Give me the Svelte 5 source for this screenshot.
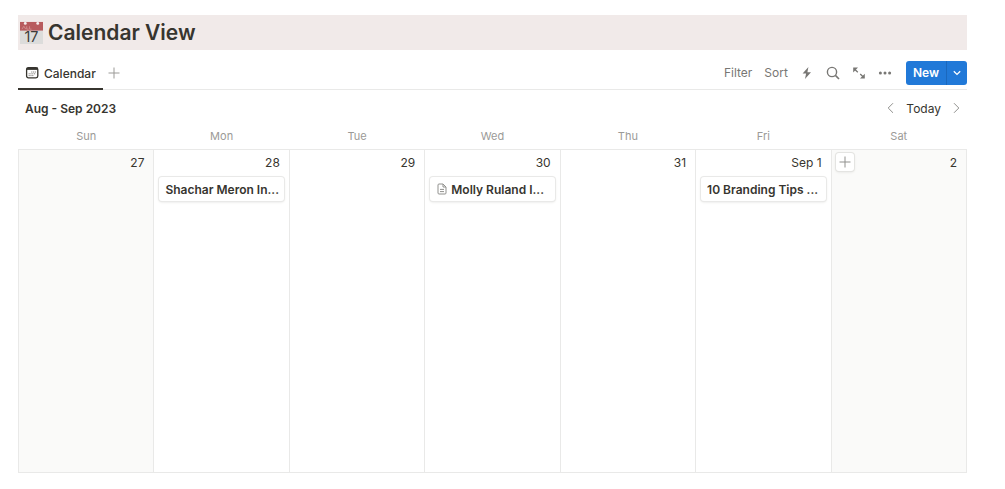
<script>
  const weekdays = ['Sun', 'Mon', 'Tue', 'Wed', 'Thu', 'Fri', 'Sat'];

  const days = [
    { label: '27', weekend: true },
    { label: '28', event: { title: 'Shachar Meron In...' } },
    { label: '29' },
    { label: '30', event: { title: 'Molly Ruland I...', page: true } },
    { label: '31' },
    { label: 'Sep 1', event: { title: '10 Branding Tips ...' } },
    { label: '2', weekend: true, add: true }
  ];
</script>

<main>
  <header class="title">
    <svg class="title-icon" viewBox="0 0 24 24" aria-hidden="true">
      <rect x="0" y="1" width="24" height="23" fill="#dcdcdb" />
      <rect x="0" y="1" width="24" height="9" fill="#b85b5e" />
      <path d="M2 8.5l2-3 2 3M7 5.5v3h2M10 5.5v3h2" fill="none" stroke="#d08c8d" stroke-width="1" />
      <circle cx="5.5" cy="2.5" r="1.5" fill="#f6eeee" />
      <circle cx="18.5" cy="2.5" r="1.5" fill="#f6eeee" />
      <text x="12" y="22" text-anchor="middle" font-size="15" fill="#3c3b39">17</text>
    </svg>
    <h1>Calendar View</h1>
  </header>

  <nav class="toolbar">
    <button class="tab">
      <svg width="14" height="14" viewBox="0 0 14 14" aria-hidden="true">
        <rect x="1.6" y="1.6" width="11.2" height="10.2" rx="1.8" fill="none" stroke="currentColor" stroke-width="1.3" />
        <path d="M1.6 2.8h11.2" stroke="currentColor" stroke-width="2.2" />
        <path d="M6.2 6h1.2M8 6h1.2M9.8 6h1.2M3.6 7.8h1.2M5.4 7.8h1.2M7.2 7.8h1.2M9 7.8h1.2M3.6 9.6h1.2M5.4 9.6h1.2M7.2 9.6h1.2" stroke="#8a8884" stroke-width="1" />
      </svg>
      Calendar
    </button>
    <button class="icon add-view" aria-label="Add view">
      <svg width="12" height="12" viewBox="0 0 12 12"><path d="M6 0.5v11M0.5 6h11" /></svg>
    </button>

    <div class="actions">
      <button>Filter</button>
      <button>Sort</button>
      <button class="icon" aria-label="Automations">
        <svg width="14" height="14" viewBox="0 0 14 14"><path d="M8.4 1L2.6 7.6h3.5L5 13l6-6.8H7.4z" fill="currentColor" stroke="none" /></svg>
      </button>
      <button class="icon" aria-label="Search">
        <svg width="14" height="14" viewBox="0 0 14 14"><circle cx="6" cy="6" r="4.6" stroke-width="1.4" /><path d="M9.4 9.4l3.6 3.6" stroke-width="1.6" /></svg>
      </button>
      <button class="icon" aria-label="Expand">
        <svg width="14" height="14" viewBox="0 0 14 14">
          <path d="M2.4 3l3.4 3.2M8.2 8l3.4 3.2" stroke-width="1.3" />
          <path d="M1.2 1.6h4.8L1.2 6.4zM12.8 12.6H8l4.8-4.8z" fill="currentColor" stroke="none" />
        </svg>
      </button>
      <button class="icon" aria-label="More">
        <svg width="14" height="14" viewBox="0 0 14 14">
          <g fill="currentColor" stroke="none"><circle cx="2.4" cy="7" r="1.5" /><circle cx="7" cy="7" r="1.5" /><circle cx="11.6" cy="7" r="1.5" /></g>
        </svg>
      </button>
      <div class="split">
        <button class="new">New</button>
        <button class="new-menu" aria-label="New options">
          <svg width="8" height="6" viewBox="0 0 8 6"><path d="M0.8 1.2L4 4.4l3.2-3.2" stroke-width="1.3" /></svg>
        </button>
      </div>
    </div>
  </nav>

  <div class="month">
    <h2>Aug - Sep 2023</h2>
    <div class="pager">
      <button class="arrow" aria-label="Previous">
        <svg width="7" height="12" viewBox="0 0 7 12"><path d="M6 1.2L1.2 6 6 10.8" /></svg>
      </button>
      <button class="today">Today</button>
      <button class="arrow" aria-label="Next">
        <svg width="7" height="12" viewBox="0 0 7 12"><path d="M1 1.2L5.8 6 1 10.8" /></svg>
      </button>
    </div>
  </div>

  <table>
    <thead>
      <tr>
        {#each weekdays as name}
          <th scope="col">{name}</th>
        {/each}
      </tr>
    </thead>
    <tbody>
      <tr>
        {#each days as day}
          <td class:weekend={day.weekend}>
            <div class="day-head">
              {#if day.add}
                <button class="add-day" aria-label="Add item">
                  <svg width="12" height="12" viewBox="0 0 12 12"><path d="M6 0.5v11M0.5 6h11" /></svg>
                </button>
              {/if}
              <span class="date">{day.label}</span>
            </div>
            {#if day.event}
              <a class="event" href="#event">
                {#if day.event.page}
                  <svg width="10" height="12" viewBox="0 0 10 12" aria-hidden="true">
                    <path d="M1 2q0-1 1-1h4l3 3v6q0 1-1 1H2q-1 0-1-1zM6 1v3h3M3 6.4h4M3 8.6h4" />
                  </svg>
                {/if}
                <span>{day.event.title}</span>
              </a>
            {/if}
          </td>
        {/each}
      </tr>
    </tbody>
  </table>
</main>

<style>
  :global(body) {
    margin: 0;
    background: #fff;
  }

  main {
    padding: 15px 38px 16px 18px;
    font-family: Inter, "Liberation Sans", sans-serif;
    font-size: 12px;
    color: #37352f;
  }

  h1,
  h2 {
    margin: 0;
    font-weight: 600;
  }

  button {
    padding: 0;
    border: none;
    background: none;
    font: inherit;
    color: inherit;
    cursor: pointer;
  }

  svg {
    display: block;
    flex: none;
    fill: none;
    stroke: currentColor;
  }

  .title {
    display: flex;
    align-items: center;
    gap: 5px;
    height: 35px;
    padding-left: 2px;
    background: #f1eae9;
  }

  .title-icon {
    width: 23px;
    height: 23px;
    stroke: none;
  }

  h1 {
    font-size: 21px;
    line-height: 35px;
  }

  .toolbar {
    display: flex;
    align-items: stretch;
    height: 39px;
    border-bottom: 1px solid #e9e9e8;
  }

  .tab {
    display: flex;
    align-items: center;
    gap: 5px;
    margin-bottom: -1px;
    padding: 8px 7px 0;
    border-bottom: 2px solid #37352f;
    font-weight: 500;
  }

  .icon {
    display: flex;
    align-items: center;
  }

  .add-view {
    margin-left: 5px;
    padding-top: 6px;
    color: #9b9a97;
  }

  .actions {
    display: flex;
    align-items: center;
    gap: 12px;
    margin-left: auto;
    padding-top: 6px;
    color: #787774;
  }

  .split {
    display: flex;
    height: 24px;
    margin-left: 2px;
    border-radius: 3px;
    background: #2179d8;
    color: #fff;
  }

  .new {
    padding: 0 7px;
    font-weight: 600;
  }

  .new-menu {
    padding: 0 6px;
    border-left: 1px solid #1b68bd;
  }

  .month {
    display: flex;
    align-items: center;
    justify-content: space-between;
    height: 36px;
    padding: 0 7px;
  }

  h2 {
    font-size: 12px;
  }

  .pager {
    display: flex;
    align-items: center;
    gap: 12px;
  }

  .arrow {
    color: #91918e;
  }

  table {
    width: 100%;
    border-collapse: collapse;
    table-layout: fixed;
  }

  th {
    height: 19px;
    padding: 0 0 4px;
    font-size: 11px;
    font-weight: 400;
    color: #9b9a97;
  }

  td {
    height: 322px;
    padding: 0 4px;
    border: 1px solid #e9e9e8;
    vertical-align: top;
  }

  .weekend {
    background: #fafaf9;
  }

  .day-head {
    display: flex;
    align-items: center;
    justify-content: space-between;
    height: 24px;
    padding-right: 5px;
  }

  .date {
    margin-left: auto;
  }

  .add-day {
    display: flex;
    align-items: center;
    justify-content: center;
    width: 18px;
    height: 18px;
    border-radius: 3px;
    background: #fff;
    box-shadow: 0 0 0 1px #e4e4e2, 0 1px 3px #dededc;
    color: #91918e;
  }

  .event {
    display: flex;
    align-items: center;
    gap: 4px;
    height: 24px;
    margin: 3px 1px 0;
    padding: 0 6px;
    border-radius: 3px;
    background: #fff;
    box-shadow: 0 0 0 1px #e9e9e8, 0 1px 3px #dededc;
    font-weight: 600;
    color: inherit;
    text-decoration: none;
    white-space: nowrap;
  }

  .event svg {
    margin-left: 1px;
    color: #91918e;
  }
</style>
